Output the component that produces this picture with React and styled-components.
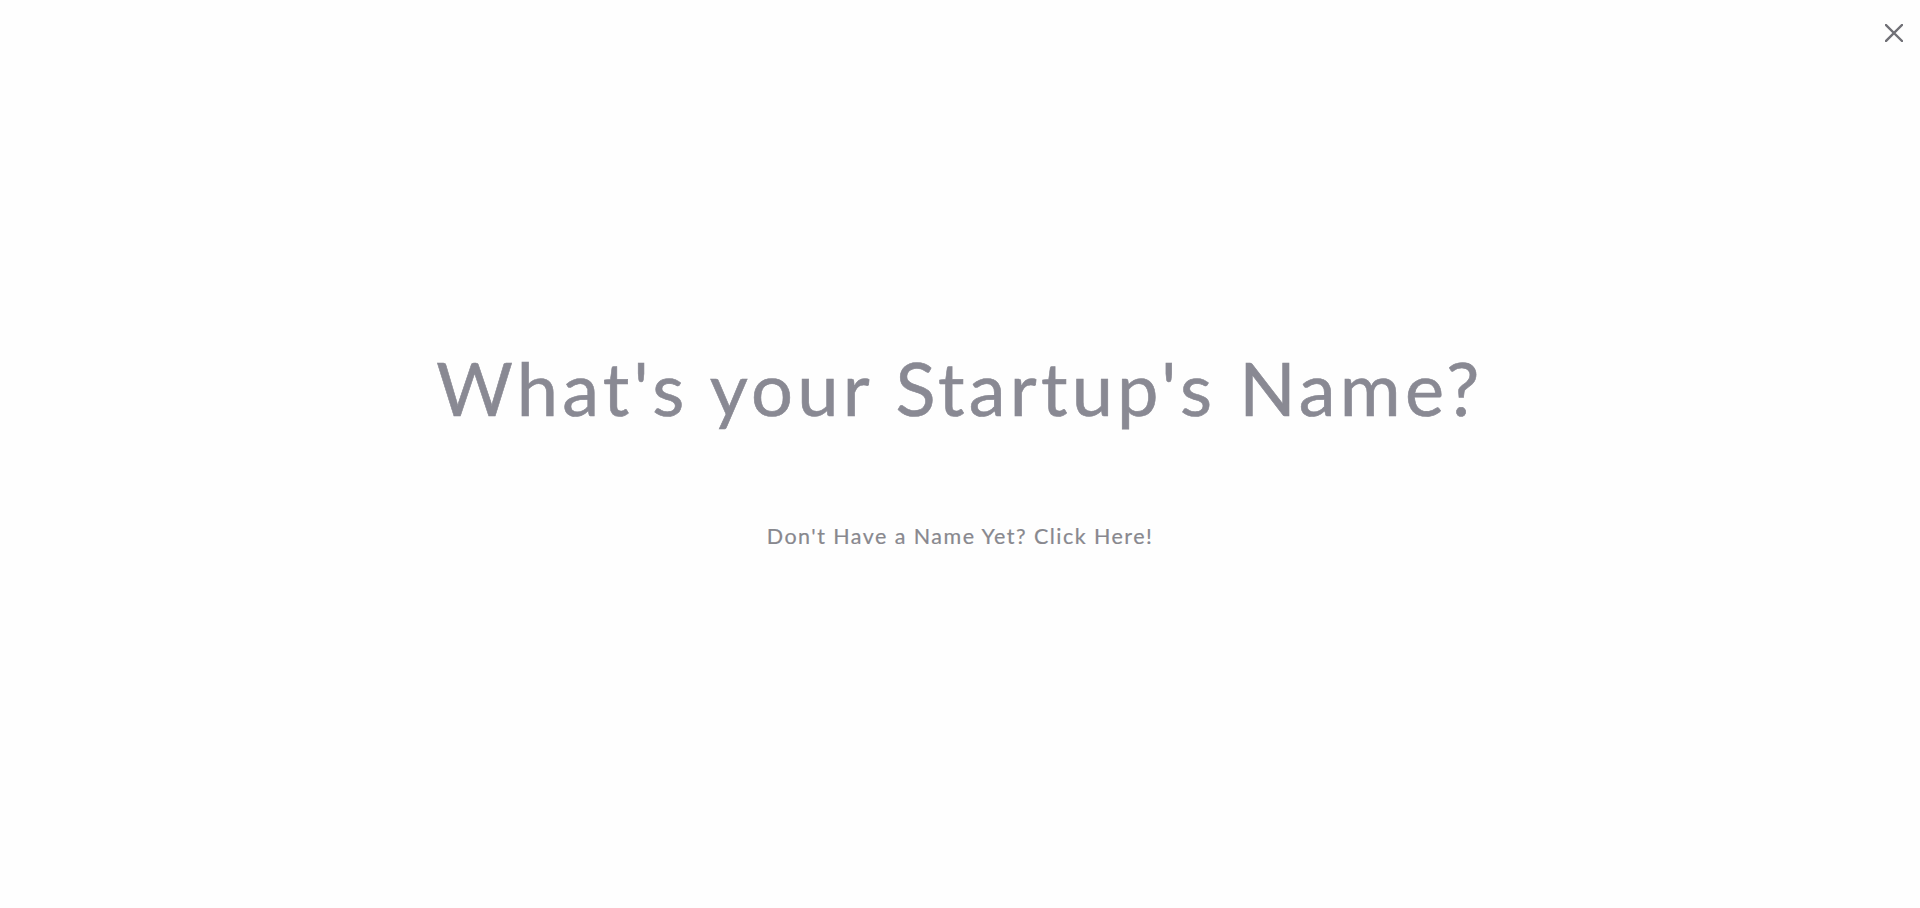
import React from "react";
import styled, { createGlobalStyle } from "styled-components";

const Global = createGlobalStyle`
  html, body { margin: 0; padding: 0; background: #fefefe; }
  body { font-family: Lato, "Liberation Sans", sans-serif; }
  * { box-sizing: border-box; }
`;

const Page = styled.div`
  min-height: 908px;
  display: flex;
  flex-direction: column;
  background: #fefefe;
  overflow: hidden;
`;

const TopBar = styled.div`
  display: flex;
  justify-content: flex-end;
  padding: 24px 17px 0 0;
`;

const CloseButton = styled.button`
  width: 18px;
  height: 18px;
  padding: 0;
  border: none;
  background: none;
  cursor: pointer;
  display: flex;
  color: #707076;
`;

const Content = styled.main`
  flex: 1;
  display: flex;
  flex-direction: column;
  align-items: center;
  padding-top: 302px;
`;

const Heading = styled.h1`
  margin: 0;
  font-family: Lato, "Liberation Sans", sans-serif;
  font-weight: 400;
  font-size: 74px;
  line-height: 1.2;
  letter-spacing: 4.2px;
  color: #898993;
  text-align: center;
  -webkit-text-stroke: 0.6px #898993;
`;

const NameLink = styled.a`
  margin-top: 91px;
  font-family: Lato, "Liberation Sans", sans-serif;
  font-size: 21.5px;
  line-height: 1.2;
  letter-spacing: 1.45px;
  color: #88888e;
  text-decoration: none;
  cursor: pointer;
  -webkit-text-stroke: 0.2px #88888e;
`;

export default function App() {
  return (
    <>
      <Global />
      <Page>
        <TopBar>
          <CloseButton aria-label="Close">
            <svg width="18" height="18" viewBox="0 0 18 18" fill="none">
              <path d="M1 1L17 17M17 1L1 17" stroke="currentColor" strokeWidth="2.4" strokeLinecap="square" />
            </svg>
          </CloseButton>
        </TopBar>
        <Content>
          <Heading>What's your Startup's Name?</Heading>
          <NameLink>Don't Have a Name Yet? Click Here!</NameLink>
        </Content>
      </Page>
    </>
  );
}
